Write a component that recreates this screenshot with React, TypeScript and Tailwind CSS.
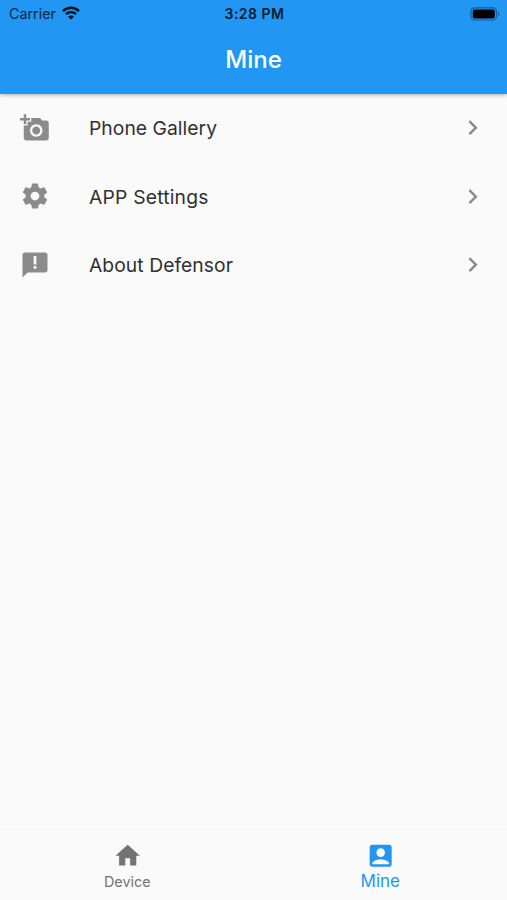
import type { ReactNode } from "react";
import { MdAccountBox, MdChevronRight, MdHome } from "react-icons/md";

interface MenuItemProps {
  label: string;
  icon: ReactNode;
  textClass: string;
}

const CameraIcon = () => (
  <path d="M3 4V1h2v3h3v2H5v3H3V6H0V4h3zm3 6V7h3V4h7l1.83 2H21c1.1 0 2 .9 2 2v12c0 1.1-.9 2-2 2H5c-1.1 0-2-.9-2-2V10h3zm7 9c2.76 0 5-2.24 5-5s-2.24-5-5-5-5 2.24-5 5 2.24 5 5 5zm-3.2-5c0 1.77 1.43 3.2 3.2 3.2s3.2-1.43 3.2-3.2-1.43-3.2-3.2-3.2-3.2 1.43-3.2 3.2z" />
);

const SettingsIcon = () => (
  <path d="M19.43 12.98c.04-.32.07-.64.07-.98s-.03-.66-.07-.98l2.11-1.65c.19-.15.24-.42.12-.64l-2-3.46c-.12-.22-.39-.3-.61-.22l-2.49 1c-.52-.4-1.08-.73-1.69-.98l-.38-2.65C14.46 2.18 14.25 2 14 2h-4c-.25 0-.46.18-.49.42l-.38 2.65c-.61.25-1.17.59-1.69.98l-2.49-1c-.23-.09-.49 0-.61.22l-2 3.46c-.13.22-.07.49.12.64l2.11 1.65c-.04.32-.07.65-.07.98s.03.66.07.98l-2.11 1.65c-.19.15-.24.42-.12.64l2 3.46c.12.22.39.3.61.22l2.49-1c.52.4 1.08.73 1.69.98l.38 2.65c.03.24.24.42.49.42h4c.25 0 .46-.18.49-.42l.38-2.65c.61-.25 1.17-.59 1.69-.98l2.49 1c.23.09.49 0 .61-.22l2-3.46c.12-.22.07-.49-.12-.64l-2.11-1.65zM12 15.5c-1.93 0-3.5-1.57-3.5-3.5s1.57-3.5 3.5-3.5 3.5 1.57 3.5 3.5-1.57 3.5-3.5 3.5z" />
);

const FeedbackIcon = () => (
  <path d="M20 2H4c-1.1 0-1.99.9-1.99 2L2 22l4-4h14c1.1 0 2-.9 2-2V4c0-1.1-.9-2-2-2zm-6.9 13h-2.2v-2.2h2.2V15zm0-3.4h-2.2V4.8h2.2v6.8z" />
);

const items: MenuItemProps[] = [
  { label: "Phone Gallery", icon: <CameraIcon />, textClass: "tracking-[0.04px]" },
  { label: "APP Settings", icon: <SettingsIcon />, textClass: "tracking-[0.2px]" },
  { label: "About Defensor", icon: <FeedbackIcon />, textClass: "tracking-[0.06px]" },
];

const StatusBar = () => (
  <div className="grid h-[25px] grid-cols-3 items-center pl-[9px] pr-[7px] pt-[3px] text-[#0a2740]">
    <div className="flex items-center gap-[6px]">
      <span className="text-[14.3px] leading-none">Carrier</span>
      <svg viewBox="0 0 18 14" className="-mt-px h-[14px] w-[18px] text-[#03101c]" fill="none" stroke="currentColor">
        <path d="M1 5.1C5.5 0.6 12.5 0.6 17 5.1" strokeWidth="2.5" />
        <path d="M4 8.2c2.9-2.8 7.1-2.8 10 0" strokeWidth="2.3" />
        <path d="M9 13.6 6.1 10.7c1.6-1.5 4.2-1.5 5.8 0z" fill="currentColor" stroke="none" />
      </svg>
    </div>
    <span className="text-center text-[14px] font-semibold leading-none tracking-[0.5px] text-[#051b30]">
      3:28 PM
    </span>
    <svg viewBox="0 0 30 14" className="-mt-px ml-auto h-[14px] w-[30px]">
      <rect x="1" y="0.8" width="25.5" height="12.2" rx="3.6" fill="none" stroke="#155d99" strokeWidth="1.2" />
      <rect x="2.7" y="2.4" width="22.1" height="9" rx="2" fill="#000" />
      <path d="M28 4.9v4c1.7-.6 1.7-3.4 0-4z" fill="#155d99" />
    </svg>
  </div>
);

const MenuItem = ({ label, icon, textClass }: MenuItemProps) => (
  <button className="flex h-[68.4px] w-full items-center px-5 text-left">
    <svg viewBox="0 0 24 24" fill="currentColor" className="size-[30px] shrink-0 text-[#8b8b8b]">
      {icon}
    </svg>
    <span className={`ml-[39px] pt-[2px] text-[19.3px] leading-none text-[#303030] ${textClass}`}>
      {label}
    </span>
    <MdChevronRight className="ml-auto size-[29.4px] text-[#8b8b8b]" />
  </button>
);

export default function App() {
  return (
    <div className="flex h-[900px] w-[507px] flex-col bg-[#fafafa] font-['Inter',sans-serif]">
      <header className="z-10 h-[93.5px] shrink-0 bg-[#2196f3] shadow-[0_1px_4px_rgba(0,0,0,0.3)]">
        <StatusBar />
        <h1 className="flex h-[69px] items-center justify-center text-[24px] font-medium leading-none text-white">
          Mine
        </h1>
      </header>

      <main className="flex-1 pt-[0.2px]">
        {items.map((item) => (
          <MenuItem key={item.label} {...item} />
        ))}
      </main>

      <nav className="grid h-[72px] shrink-0 grid-cols-2 border-t border-[#f5f5f5] bg-[#fafafa]">
        <button className="flex flex-col items-center pl-px pt-[12px] text-[#737373]">
          <MdHome className="size-[29.4px]" />
          <span className="mt-[3px] text-[14.4px] leading-[18px]">Device</span>
        </button>
        <button className="flex flex-col items-center pt-[12px] text-[#2196f3]">
          <MdAccountBox className="size-[29.4px]" />
          <span className="mt-px text-[17px] leading-[20px]">Mine</span>
        </button>
      </nav>
    </div>
  );
}
